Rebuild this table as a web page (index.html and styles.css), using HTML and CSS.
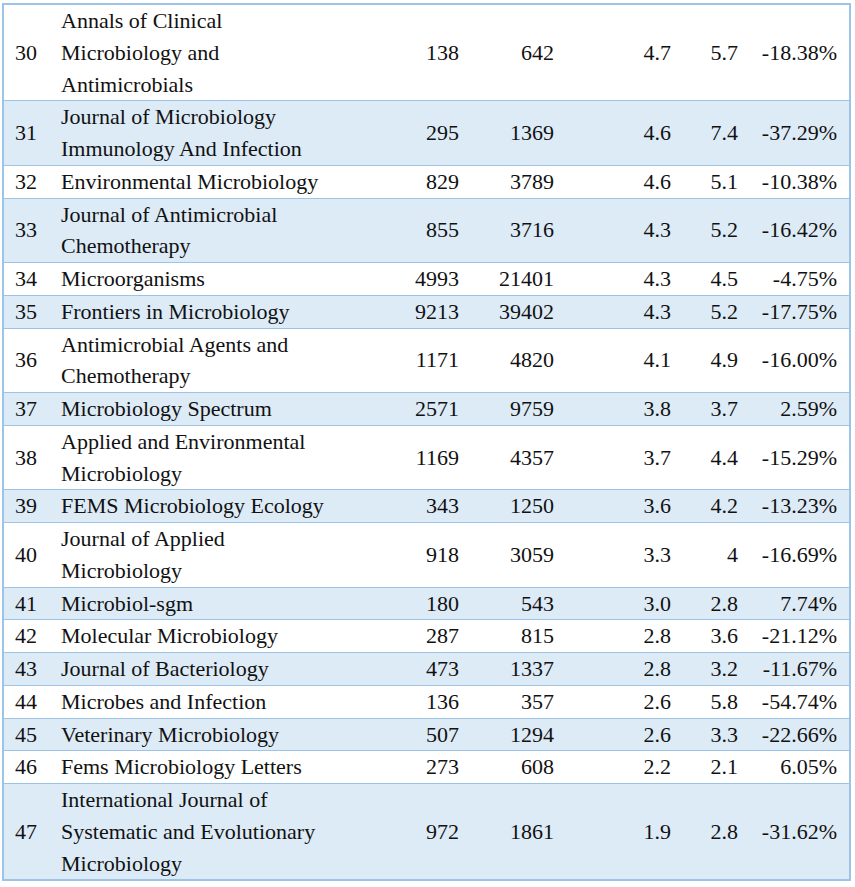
FILE: index.html
```html
<!DOCTYPE html>
<html>
<head>
<meta charset="utf-8">
<link rel="stylesheet" href="styles.css">
</head>
<body>
<table class="jtable">
<colgroup>
<col class="c-rank"><col class="c-name"><col class="c-a"><col class="c-b"><col class="c-c"><col class="c-d"><col class="c-e">
</colgroup>
<tbody>
<tr><td class="rank">30</td><td class="name">Annals of Clinical Microbiology and Antimicrobials</td><td class="num">138</td><td class="num">642</td><td class="num">4.7</td><td class="num">5.7</td><td class="num">-18.38%</td></tr>
<tr class="alt"><td class="rank">31</td><td class="name">Journal of Microbiology Immunology And Infection</td><td class="num">295</td><td class="num">1369</td><td class="num">4.6</td><td class="num">7.4</td><td class="num">-37.29%</td></tr>
<tr><td class="rank">32</td><td class="name">Environmental Microbiology</td><td class="num">829</td><td class="num">3789</td><td class="num">4.6</td><td class="num">5.1</td><td class="num">-10.38%</td></tr>
<tr class="alt"><td class="rank">33</td><td class="name">Journal of Antimicrobial Chemotherapy</td><td class="num">855</td><td class="num">3716</td><td class="num">4.3</td><td class="num">5.2</td><td class="num">-16.42%</td></tr>
<tr><td class="rank">34</td><td class="name">Microorganisms</td><td class="num">4993</td><td class="num">21401</td><td class="num">4.3</td><td class="num">4.5</td><td class="num">-4.75%</td></tr>
<tr class="alt"><td class="rank">35</td><td class="name">Frontiers in Microbiology</td><td class="num">9213</td><td class="num">39402</td><td class="num">4.3</td><td class="num">5.2</td><td class="num">-17.75%</td></tr>
<tr><td class="rank">36</td><td class="name">Antimicrobial Agents and Chemotherapy</td><td class="num">1171</td><td class="num">4820</td><td class="num">4.1</td><td class="num">4.9</td><td class="num">-16.00%</td></tr>
<tr class="alt"><td class="rank">37</td><td class="name">Microbiology Spectrum</td><td class="num">2571</td><td class="num">9759</td><td class="num">3.8</td><td class="num">3.7</td><td class="num">2.59%</td></tr>
<tr><td class="rank">38</td><td class="name">Applied and Environmental Microbiology</td><td class="num">1169</td><td class="num">4357</td><td class="num">3.7</td><td class="num">4.4</td><td class="num">-15.29%</td></tr>
<tr class="alt"><td class="rank">39</td><td class="name">FEMS Microbiology Ecology</td><td class="num">343</td><td class="num">1250</td><td class="num">3.6</td><td class="num">4.2</td><td class="num">-13.23%</td></tr>
<tr><td class="rank">40</td><td class="name">Journal of Applied Microbiology</td><td class="num">918</td><td class="num">3059</td><td class="num">3.3</td><td class="num">4</td><td class="num">-16.69%</td></tr>
<tr class="alt"><td class="rank">41</td><td class="name">Microbiol-sgm</td><td class="num">180</td><td class="num">543</td><td class="num">3.0</td><td class="num">2.8</td><td class="num">7.74%</td></tr>
<tr><td class="rank">42</td><td class="name">Molecular Microbiology</td><td class="num">287</td><td class="num">815</td><td class="num">2.8</td><td class="num">3.6</td><td class="num">-21.12%</td></tr>
<tr class="alt"><td class="rank">43</td><td class="name">Journal of Bacteriology</td><td class="num">473</td><td class="num">1337</td><td class="num">2.8</td><td class="num">3.2</td><td class="num">-11.67%</td></tr>
<tr><td class="rank">44</td><td class="name">Microbes and Infection</td><td class="num">136</td><td class="num">357</td><td class="num">2.6</td><td class="num">5.8</td><td class="num">-54.74%</td></tr>
<tr class="alt"><td class="rank">45</td><td class="name">Veterinary Microbiology</td><td class="num">507</td><td class="num">1294</td><td class="num">2.6</td><td class="num">3.3</td><td class="num">-22.66%</td></tr>
<tr><td class="rank">46</td><td class="name">Fems Microbiology Letters</td><td class="num">273</td><td class="num">608</td><td class="num">2.2</td><td class="num">2.1</td><td class="num">6.05%</td></tr>
<tr class="alt"><td class="rank">47</td><td class="name">International Journal of Systematic and Evolutionary Microbiology</td><td class="num">972</td><td class="num">1861</td><td class="num">1.9</td><td class="num">2.8</td><td class="num">-31.62%</td></tr>
</tbody>
</table>
</body>
</html>
```
FILE: styles.css
```css
html, body {
  margin: 0;
  padding: 0;
  background: #ffffff;
}
body {
  padding: 3px 0 0 2px;
  font-family: "Liberation Serif", serif;
  font-size: 22px;
  color: #111111;
}
.jtable {
  border-collapse: collapse;
  table-layout: fixed;
  width: 847px;
  border: 2px solid #9dc3e6;
}
.c-rank { width: 48px; }
.c-name { width: 300px; }
.c-a { width: 120px; }
.c-b { width: 95px; }
.c-c { width: 117px; }
.c-d { width: 67px; }
.c-e { width: 100px; }
.jtable td {
  padding: 0;
  line-height: 31.75px;
  vertical-align: middle;
}
.jtable tr {
  border-bottom: 1px solid #9dc3e6;
}
.jtable tr.alt {
  background: #ddebf7;
}
.jtable td.rank {
  padding-left: 11px;
}
.jtable td.name {
  padding-left: 10px;
  padding-right: 13px;
}
.jtable td.num {
  text-align: right;
  padding-right: 12px;
}
```
